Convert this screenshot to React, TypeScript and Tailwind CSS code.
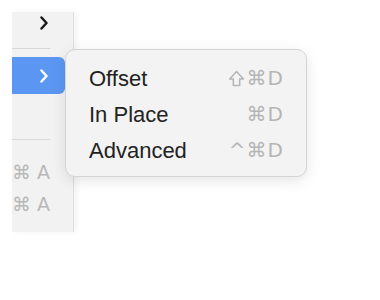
import React from "react";

const ITEMS = [
    { label: "Offset", shift: true, keys: "⌘D" },
    { label: "In Place", shift: false, keys: "⌘D" },
    { label: "Advanced", shift: false, keys: "^⌘D" },
];

function Chevron() {
    return (
        <svg width="10" height="14" viewBox="0 0 10 14">
            <polyline points="2.5,1.5 7.5,7 2.5,12.5" fill="none" stroke="currentColor" strokeWidth="2.5" strokeLinecap="round" strokeLinejoin="round" />
        </svg>
    );
}

function ShiftIcon() {
    return (
        <svg width="17" height="17" viewBox="0 0 16 16" className="mr-[2px]">
            <path d="M8 1.5 L14.5 8.5 H11 V14.5 H5 V8.5 H1.5 Z" fill="none" stroke="currentColor" strokeWidth="1.4" strokeLinejoin="round" />
        </svg>
    );
}

export default function App() {
    return (
        <div className="relative w-[380px] h-[300px] bg-white overflow-hidden font-['Liberation_Sans','DejaVu_Sans',sans-serif]">
            <div className="flex pt-[12px] pl-[12px]">
                {/* sidebar menu, cut off on the left */}
                <div className="w-[62px] h-[220px] bg-[#f2f2f2] border-r border-[#dedede] shadow-[3px_0_6px_rgba(0,0,0,0.05)] overflow-hidden flex flex-col">
                    <div className="h-[22px] flex items-center justify-end pr-[24px] text-[#1a1a1a]">
                        <Chevron />
                    </div>
                    <div className="h-[14px]" />
                    <div className="h-px w-[38px] bg-[#d8d8d8]" />
                    <div className="h-[8px]" />
                    <div className="h-[37px] w-[53px] bg-[#5b97f2] rounded-r-[6px] flex items-center justify-end pr-[16px] text-white">
                        <Chevron />
                    </div>
                    <div className="h-[45px]" />
                    <div className="h-px w-[38px] bg-[#d8d8d8]" />
                    <div className="h-[16px]" />
                    <div className="flex flex-col w-[38px] items-end text-[#b8b8b8] text-[19px] leading-[32px] whitespace-nowrap font-['DejaVu_Sans',sans-serif]">
                        <span>⌘ A</span>
                        <span>⌘ A</span>
                    </div>
                </div>
            </div>

            {/* submenu */}
            <div className="absolute left-[65px] top-[49px] w-[242px] h-[128px] bg-[#f3f3f3] border border-[#d4d4d4] rounded-[10px] shadow-[0_4px_14px_rgba(0,0,0,0.10)] pt-[10px] pl-[23px] pr-[22px]">
                {ITEMS.map((it) => (
                    <div key={it.label} className="h-[36px] flex items-center justify-between">
                        <span className="text-[22px] text-[#222222]">{it.label}</span>
                        <span className="flex items-center text-[20px] text-[#b5b5b5] font-['DejaVu_Sans','Liberation_Sans',sans-serif] tracking-[1px]">
                            {it.shift && <ShiftIcon />}
                            {it.keys}
                        </span>
                    </div>
                ))}
            </div>
        </div>
    );
}
